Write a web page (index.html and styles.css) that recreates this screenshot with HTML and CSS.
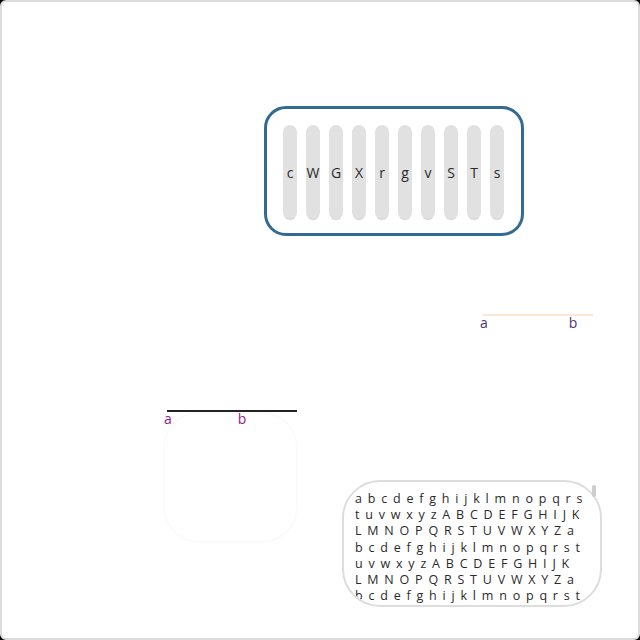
FILE: index.html
```html
<!DOCTYPE html>
<html lang="en">
<head>
    <meta charset="UTF-8">
    <title>Widgets</title>
    <link rel="stylesheet" href="styles.css">
</head>
<body>
    <div class="frame">
        <div class="slider-box">
            <div class="bar">c</div>
            <div class="bar">W</div>
            <div class="bar">G</div>
            <div class="bar">X</div>
            <div class="bar">r</div>
            <div class="bar">g</div>
            <div class="bar">v</div>
            <div class="bar">S</div>
            <div class="bar">T</div>
            <div class="bar">s</div>
        </div>

        <div class="axis axis-peach">
            <span class="tick tick-a">a</span>
            <span class="tick tick-b">b</span>
        </div>

        <div class="row">
            <div class="col">
                <div class="axis axis-dark">
                    <span class="tick tick-a">a</span>
                    <span class="tick tick-b">b</span>
                </div>
                <div class="ghost"></div>
            </div>

            <div class="textbox">
                <div class="textbox-inner">
                    abcdefghijklmnopqrs<br>
                    tuvwxyzABCDEFGHIJK<br>
                    LMNOPQRSTUVWXYZa<br>
                    bcdefghijklmnopqrst<br>
                    uvwxyzABCDEFGHIJK<br>
                    LMNOPQRSTUVWXYZa<br>
                    bcdefghijklmnopqrst<br>
                    uvwxyzABCDEFGHIJK<br>
                    LMNOPQRSTUVWXYZa
                </div>
                <div class="thumb"></div>
            </div>
        </div>
    </div>
</body>
</html>
```

FILE: styles.css
```css
body {
    margin: 0;
    background-color: #000;
    font-family: 'Open Sans', 'Liberation Sans', sans-serif;
    color: #333;
}
.frame {
    width: 640px;
    height: 640px;
    box-sizing: border-box;
    background-color: #fff;
    border: 2px solid #dcdcdc;
    border-radius: 6px;
    overflow: hidden;
}
/* Slider box */
.slider-box {
    width: 260px;
    height: 130px;
    box-sizing: border-box;
    margin: 104px 0 0 262px;
    padding: 16px;
    border: 3px solid #336a92;
    border-radius: 22px;
    display: flex;
    gap: 9px;
}
.bar {
    width: 14px;
    height: 94px;
    border-radius: 7px;
    background-color: #e1e1e1;
    box-shadow: 0 2px 1px -1px #cfcfcf;
    display: flex;
    align-items: center;
    justify-content: center;
    font-size: 14px;
    color: #2a2a2a;
}
/* Axes */
.axis {
    display: flex;
    font-size: 14px;
    line-height: 14px;
}
.axis-peach {
    width: 110px;
    margin: 78px 0 0 481px;
    border-top: 2px solid #fde6d3;
    color: #4a3872;
}
.axis-dark {
    width: 130px;
    margin-left: 4px;
    border-top: 2px solid #222;
    color: #951a8c;
}
.tick-a {
    margin-left: -3px;
}
.axis-peach .tick-b {
    margin-left: 81px;
}
.axis-dark .tick-b {
    margin-left: 66px;
}
.row {
    display: flex;
    align-items: flex-start;
    margin-top: 80px;
}
.col {
    margin-left: 161px;
}
.ghost {
    width: 135px;
    height: 131px;
    box-sizing: border-box;
    margin-top: -14px;
    border: 2px solid #fbfbfb;
    border-radius: 36px;
}
/* Text area */
.textbox {
    position: relative;
    margin: 70px 0 0 44px;
}
.textbox-inner {
    width: 260px;
    height: 127px;
    box-sizing: border-box;
    padding: 9px 0 0 11px;
    border: 2px solid #ddd;
    border-radius: 38px;
    overflow: hidden;
    font-size: 12.5px;
    line-height: 16.2px;
    letter-spacing: 5.8px;
    white-space: nowrap;
    color: #2a2a2a;
}
.thumb {
    position: absolute;
    top: 5px;
    right: 6px;
    width: 4px;
    height: 12px;
    border-radius: 2px;
    background-color: #ccc;
}
```
